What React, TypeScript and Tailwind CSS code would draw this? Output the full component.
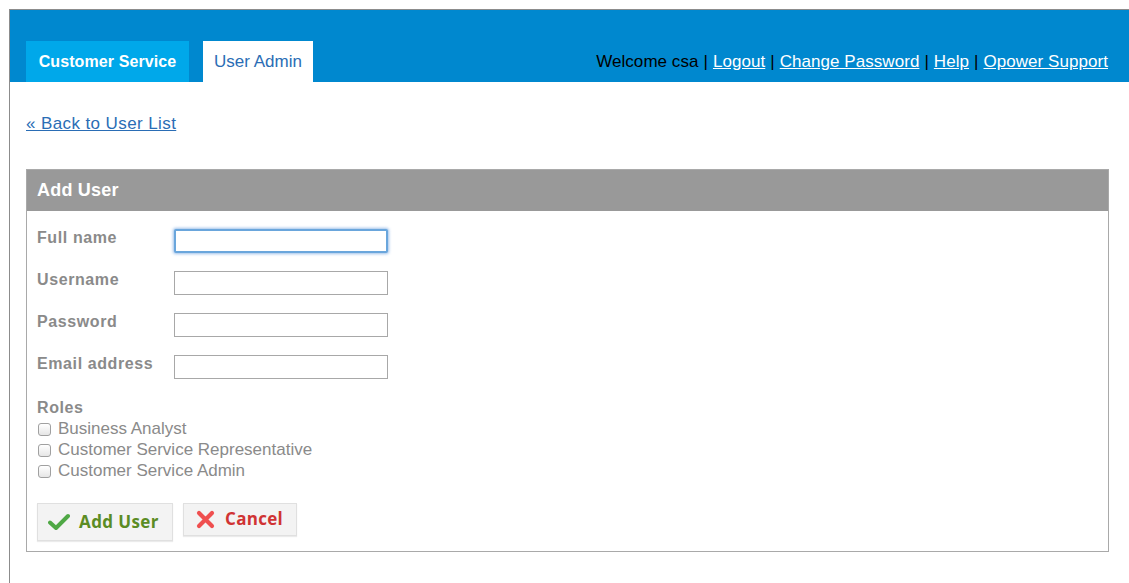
import React from "react";

const fields = ["Full name", "Username", "Password", "Email address"];
const roles = ["Business Analyst", "Customer Service Representative", "Customer Service Admin"];

function CheckIcon() {
  return (
    <svg width="22" height="18" viewBox="0 0 22 18">
      <path d="M2 9.5 L8 15 L20 3" fill="none" stroke="#4fa845" strokeWidth="4" strokeLinecap="round" strokeLinejoin="round" />
    </svg>
  );
}

function CrossIcon() {
  return (
    <svg width="19" height="19" viewBox="0 0 19 19">
      <path d="M3 3 L16 16 M16 3 L3 16" fill="none" stroke="#ef4f4f" strokeWidth="4.2" strokeLinecap="round" />
    </svg>
  );
}

export default function App() {
  return (
    <div className="min-h-[583px] w-[1129px] bg-white pl-[9px] pt-[9px] font-['Liberation_Sans',Arial,sans-serif]">
      <div className="min-h-[574px] border-l border-t border-[#8c8c8c]">
        {/* top bar */}
        <div className="flex h-[72px] items-end justify-between bg-[#0088cf] pl-[16px] pr-[21px]">
          <div className="flex gap-[14px]">
            <div className="flex h-[41px] w-[163px] items-center justify-center bg-[#00a8ea] text-[16px] font-bold tracking-[0.1px] text-white">
              Customer Service
            </div>
            <div className="flex h-[41px] w-[110px] items-center justify-center bg-white text-[17px] text-[#2a6db5]">
              User Admin
            </div>
          </div>
          <div className="flex h-[41px] items-center text-[17px] tracking-[0.05px] text-black">
            <span>Welcome csa</span>
            <span className="mx-[5px]">|</span>
            <a className="text-white underline">Logout</a>
            <span className="mx-[5px]">|</span>
            <a className="text-white underline">Change Password</a>
            <span className="mx-[5px]">|</span>
            <a className="text-white underline">Help</a>
            <span className="mx-[5px]">|</span>
            <a className="text-white underline">Opower Support</a>
          </div>
        </div>

        {/* content */}
        <div className="pl-[16px] pr-[20px] pt-[29px]">
          <a className="text-[17px] tracking-[0.4px] text-[#2a6db5] underline">« Back to User List</a>

          <div className="mt-[32px] w-[1083px] border border-[#a9a9a9]">
            <div className="flex h-[41px] items-center bg-[#999999] pl-[10px] text-[18px] font-bold tracking-[0.2px] text-white">
              Add User
            </div>
            <div className="px-[10px] pb-[10px] pt-[18px]">
              <div className="flex flex-col gap-[18px]">
                {fields.map((f, i) => (
                  <div key={f} className="flex h-[24px] items-start">
                    <label className="w-[137px] text-[16px] font-bold leading-[18px] tracking-[0.6px] text-[#8a8a8a]">{f}</label>
                    <input
                      type={f === "Password" ? "password" : "text"}
                      className={
                        i === 0
                          ? "h-[24px] w-[214px] rounded-[2px] border-2 border-[#6aa6dc] bg-white shadow-[0_0_3px_1px_rgba(90,150,220,0.6)] outline-none"
                          : "h-[24px] w-[214px] border border-[#a8a8a8] bg-white outline-none"
                      }
                    />
                  </div>
                ))}
              </div>

              <div className="mt-[20px] text-[16px] font-bold leading-[17px] tracking-[0.6px] text-[#8a8a8a]">Roles</div>
              <div className="mt-[3px] flex flex-col">
                {roles.map((r) => (
                  <label key={r} className="flex h-[21px] items-center text-[17px] text-[#8a8a8a]">
                    <span className="ml-[1px] mr-[7px] inline-block h-[13px] w-[13px] rounded-[3px] border border-[#a0a0a0] bg-gradient-to-b from-white to-[#e6e6e6]" />
                    {r}
                  </label>
                ))}
              </div>

              <div className="mt-[21px] flex items-start gap-[10px]">
                <button className="flex h-[38px] w-[136px] items-center gap-[9px] border border-[#e0e0e0] bg-[#f3f3f3] pl-[10px] font-['Open_Sans',sans-serif] text-[17px] font-bold tracking-[0.4px] text-[#5b8c24] shadow-[0_1px_1px_rgba(0,0,0,0.08)]">
                  <CheckIcon />
                  Add User
                </button>
                <button className="flex h-[33px] w-[114px] items-center gap-[10px] border border-[#e0e0e0] bg-[#f3f3f3] pl-[12px] font-['Open_Sans',sans-serif] text-[17px] font-bold tracking-[0.3px] text-[#d03333] shadow-[0_1px_1px_rgba(0,0,0,0.08)]">
                  <CrossIcon />
                  Cancel
                </button>
              </div>
            </div>
          </div>
        </div>
      </div>
    </div>
  );
}
